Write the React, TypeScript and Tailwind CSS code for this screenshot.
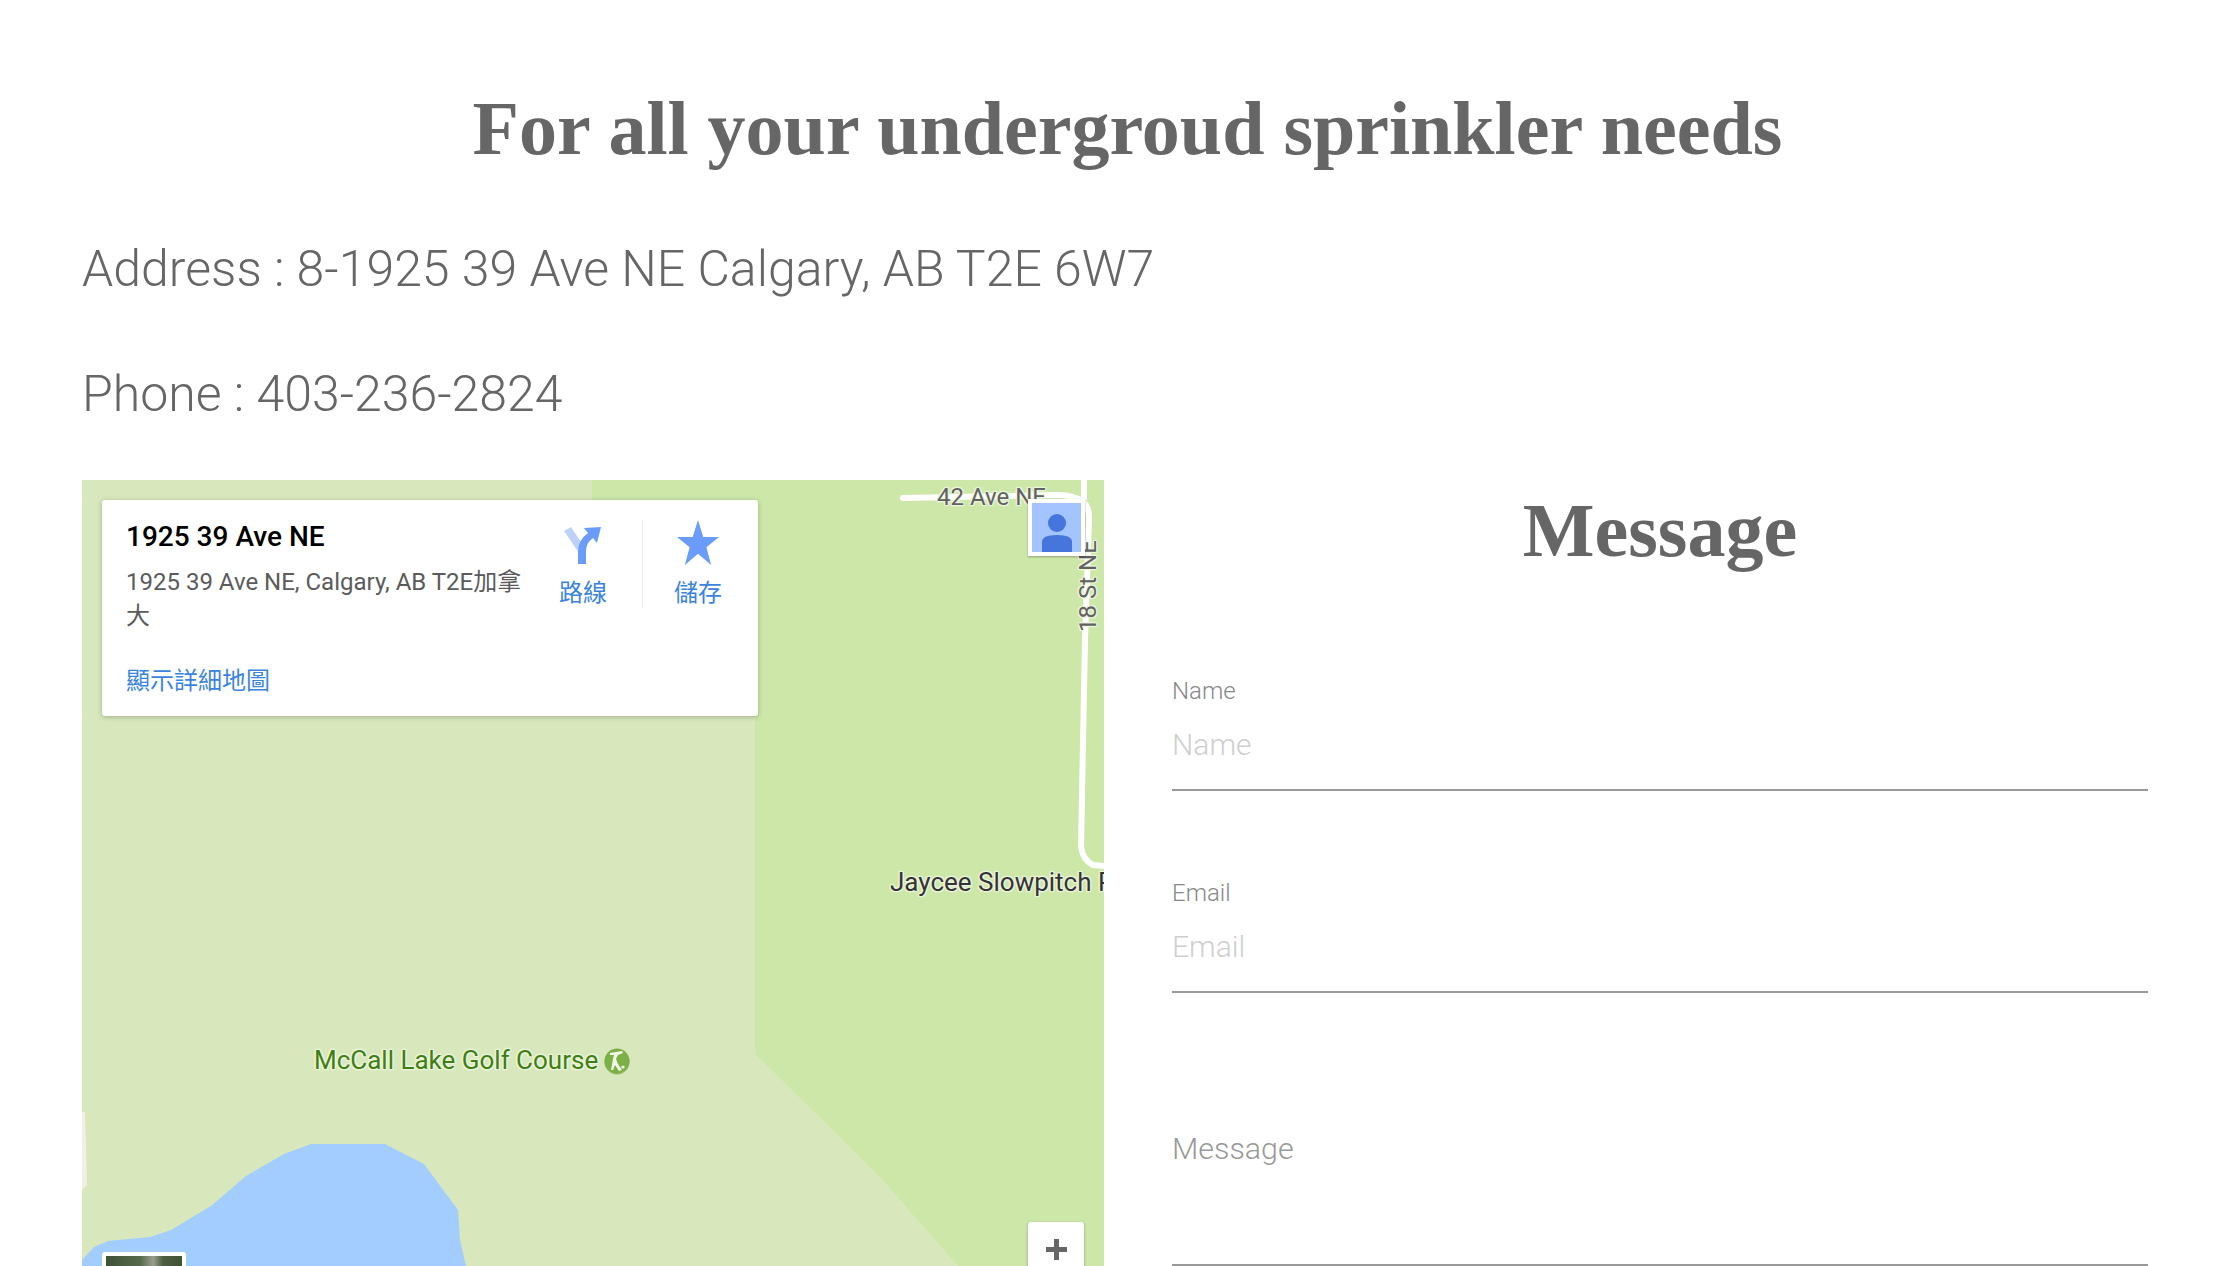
const halo = "[text-shadow:0_0_2px_#eef5e0,0_0_2px_#eef5e0,1px_1px_1px_#eef5e0,-1px_-1px_1px_#eef5e0,1px_-1px_1px_#eef5e0,-1px_1px_1px_#eef5e0]";

function MapBase() {
  return (
    <svg className="absolute left-0 top-0" width="1022" height="800" viewBox="82 480 1022 800" fill="none">
      <rect x="82" y="480" width="1022" height="800" fill="#cde7a8" />
      <polygon
        points="82,480 592,480 592,510 755,510 755,1054 802,1100 880,1177 958,1266 970,1280 82,1280"
        fill="#d8e8bc"
      />
      <polygon
        points="82,1260 94,1247 108,1241 150,1237 171,1230 211,1206 246,1176 284,1154 311,1144 385,1144 424,1164 458,1210 460,1240 466,1266 468,1280 82,1280"
        fill="#a3ccff"
      />
      <polygon points="82,1112 85,1112 87,1185 82,1190" fill="#f2efe9" />
      <path
        d="M903 498 L1058 495 Q1070 495 1081 500 Q1090 506 1089 520 L1085 640 L1081 847 Q1083 860 1093 865 L1104 866"
        stroke="#fff"
        strokeWidth="6"
        strokeLinecap="round"
      />
      <path d="M1084 480 L1084 500" stroke="#fff" strokeWidth="6" />
    </svg>
  );
}

function DirectionsIcon() {
  return (
    <svg width="38" height="38" viewBox="0 0 38 38" fill="none">
      <path d="M0 4 L7 0 L19 18 L19 26 L15 26 Z" fill="#bcd2f9" />
      <path d="M14 37 H22 V24 Q22 16 29 11 L33 16 L37 0 L20 1 L24 6 Q14 13 14 25 Z" fill="#6b9bfb" />
    </svg>
  );
}

function PersonBadge() {
  return (
    <div className="absolute left-[946px] top-[19px] flex h-[57px] w-[57px] items-end justify-center border-[4px] border-white bg-[#a3c4ff] shadow-[0_1px_2px_rgba(0,0,0,0.3)]">
      <svg width="30" height="38" viewBox="0 0 30 38" fill="#4575dd">
        <circle cx="15" cy="9" r="9" />
        <path d="M0 38 V28 Q0 21 15 21 Q30 21 30 28 V38 Z" />
      </svg>
    </div>
  );
}

function GolfBadge() {
  return (
    <svg className="absolute left-[522px] top-[568px]" width="26" height="27" viewBox="0 0 26 27">
      <circle cx="13" cy="14" r="12.5" fill="#6b9a3a" opacity="0.6" />
      <circle cx="13" cy="13" r="12.5" fill="#7cb047" />
      <path d="M6 5 L18 3 L19 5 L14 7 L12 11 L14 16 L18 22 L15 23 L11 17 L9 22 L7 22 L9 11 L10 7 L6 7 Z" fill="#f2f7e8" />
      <circle cx="19" cy="19" r="1.6" fill="#f2f7e8" />
    </svg>
  );
}

function InfoCard() {
  return (
    <div className="absolute left-[20px] top-[20px] flex h-[216px] w-[656px] rounded-[3px] bg-white pl-[24px] pt-[20px] shadow-[0_1px_5px_rgba(0,0,0,0.25)]">
      <div className="w-[400px]">
        <div className="text-[28px] font-medium leading-[34px] text-black">1925 39 Ave NE</div>
        <div className="mt-[11px] text-[24px] font-normal leading-[34px] text-[#5b5b5b]">
          1925 39 Ave NE, Calgary, AB T2E加拿大
        </div>
        <a className="mt-[31px] block text-[24px] leading-[34px] text-[#3a84df]">顯示詳細地圖</a>
      </div>
      <div className="ml-[16px] flex w-[82px] flex-col items-center">
        <div className="mt-[7px] h-[38px]">
          <DirectionsIcon />
        </div>
        <span className="mt-[11px] text-[24px] leading-[34px] text-[#3a84df]">路線</span>
      </div>
      <div className="ml-[18px] h-[88px] w-px bg-[#ececec]" />
      <div className="ml-[14px] flex w-[82px] flex-col items-center">
        <svg width="42" height="45" viewBox="0 0 24 24" preserveAspectRatio="none" fill="#6b9bfb">
          <path d="M12 0 L15 9 L24 9 L16.8 14.5 L19.5 24 L12 18 L4.5 24 L7.2 14.5 L0 9 L9 9 Z" />
        </svg>
        <span className="mt-[11px] text-[24px] leading-[34px] text-[#3a84df]">儲存</span>
      </div>
    </div>
  );
}

function MapPanel() {
  return (
    <div className="relative h-[786px] w-[1022px] shrink-0 overflow-hidden">
      <MapBase />
      <span className={`absolute left-[855px] top-[2px] whitespace-nowrap text-[24px] leading-[30px] text-[#616161] ${halo}`}>
        42 Ave NE
      </span>
      <span
        className={`absolute left-[960px] top-[91px] origin-center -rotate-90 whitespace-nowrap text-[24px] leading-[30px] text-[#616161] ${halo}`}
      >
        18 St NE
      </span>
      <PersonBadge />
      <span className={`absolute left-[808px] top-[387px] whitespace-nowrap text-[26px] leading-[30px] text-[#333] ${halo}`}>
        Jaycee Slowpitch Park
      </span>
      <span className={`absolute left-[232px] top-[565px] whitespace-nowrap text-[26px] leading-[30px] text-[#3f7f11] ${halo}`}>
        McCall Lake Golf Course
      </span>
      <GolfBadge />
      <InfoCard />
      <div className="absolute left-[20px] top-[772px] h-[40px] w-[84px] rounded-[3px] border-[4px] border-white bg-[linear-gradient(90deg,#3f5236_0%,#55694a_45%,#9a9f8e_62%,#4d5f3e_75%,#3f5236_100%)]" />
      <div className="absolute left-[946px] top-[742px] flex h-[60px] w-[56px] justify-center rounded-[3px] bg-white pt-[17px] shadow-[0_1px_3px_rgba(0,0,0,0.3)]">
        <svg width="21" height="21" viewBox="0 0 21 21" fill="#666">
          <path d="M8 0 H13 V8 H21 V13 H13 V21 H8 V13 H0 V8 H8 Z" />
        </svg>
      </div>
    </div>
  );
}

function Field({ label }: { label: string }) {
  return (
    <div className="flex h-[202px] flex-col">
      <label className="text-[24px] font-light leading-[30px] text-[#888]">{label}</label>
      <input
        placeholder={label}
        className="mt-[8px] h-[77px] w-full border-b-2 border-[#999] bg-transparent pb-[15px] text-[30px] font-light outline-none placeholder:text-[#cfcfcf]"
      />
    </div>
  );
}

function MessageForm() {
  return (
    <div className="flex h-[786px] min-w-0 flex-1 flex-col">
      <h2 className="text-center font-['Liberation_Serif'] text-[76px] font-bold leading-[100px] text-[#666]">
        Message
      </h2>
      <form className="mt-[96px] flex flex-col">
        <Field label="Name" />
        <Field label="Email" />
        <textarea
          placeholder="Message"
          className="mt-[50px] h-[136px] w-full resize-none border-b-2 border-[#999] bg-transparent text-[30.4px] font-light leading-[38px] outline-none placeholder:text-[#999]"
        />
      </form>
    </div>
  );
}

export default function App() {
  return (
    <div className="h-[1266px] w-[2240px] overflow-hidden bg-white font-['Roboto','Noto_Sans_CJK_TC',sans-serif] text-[#666]">
      <h1 className="pl-[15px] pt-[80px] text-center font-['Liberation_Serif'] text-[76px] font-bold leading-[96px] text-[#666]">
        For all your undergroud sprinkler needs
      </h1>
      <div className="pl-[82px] pr-[92px]">
        <p className="mt-[63px] text-[50px] font-light leading-[60px]">Address : 8-1925 39 Ave NE Calgary, AB T2E 6W7</p>
        <p className="mt-[65px] text-[50px] font-light leading-[60px]">Phone : 403-236-2824</p>
        <div className="mt-[56px] flex gap-[68px]">
          <MapPanel />
          <MessageForm />
        </div>
      </div>
    </div>
  );
}
